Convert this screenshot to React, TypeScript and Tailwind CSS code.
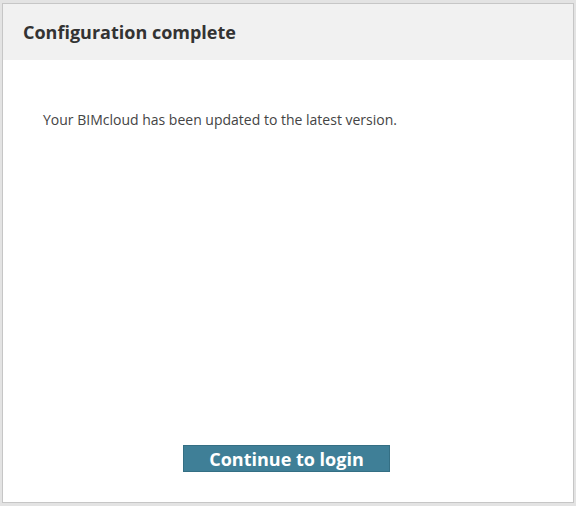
import React from 'react';

const App: React.FC = () => {
  return (
    <div
      className="w-[576px] h-[506px] bg-[#e3e3e3] pt-[3px] pb-[3px] pl-[2px] pr-[2px] flex"
      style={{ fontFamily: '"Open Sans", "Liberation Sans", sans-serif' }}
    >
      <div className="flex-1 flex flex-col border border-[#c6c6c6] bg-white">
        <div className="h-[56px] shrink-0 bg-[#f1f1f1] flex items-center pl-[20px]">
          <h1 className="text-[18px] font-bold text-[#333333] leading-none">Configuration complete</h1>
        </div>

        <div className="flex-1 flex flex-col">
          <p className="pl-[40px] pt-[50px] text-[14px] text-[#444444] leading-[20px]">
            Your BIMcloud has been updated to the latest version.
          </p>

          <div className="mt-auto flex justify-center pb-[30px] pr-[3px]">
            <button className="w-[207px] h-[27px] bg-[#3f7f97] border border-[#346f84] text-white text-[18px] font-bold leading-none">
              Continue to login
            </button>
          </div>
        </div>
      </div>
    </div>
  );
};

export default App;
